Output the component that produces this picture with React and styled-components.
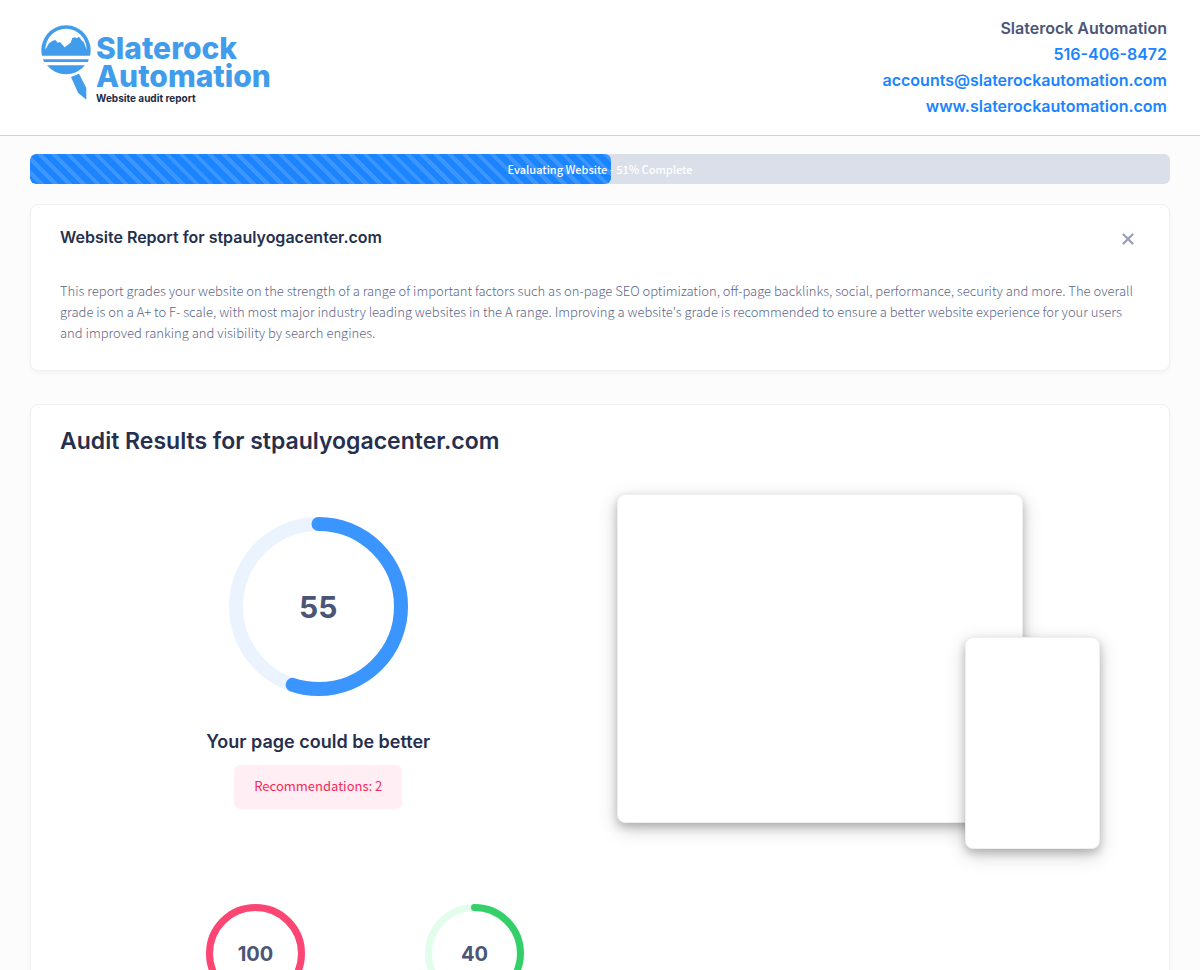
import React, { useState } from 'react';

import styled, { createGlobalStyle } from 'styled-components';
import { X } from 'lucide-react';

const rings = [
    { value: 100, color: '#fb4674', track: '#ffecf1' },
    { value: 40, color: '#35cf6a', track: '#e3fded' },
];

function Logo() {
    return (
        <LogoLink href='/'>
            <svg width='50' height='77' viewBox='35 28 150 231' fill='#419dec' aria-hidden='true'>
                <path
                    fillRule='evenodd'
                    d='M38 123a74 74 0 1 1 144 0z M48 105L58 87L68 79L78 76L85 84L92 82L106 98L124 84L129 70L137 68L142 71L149 66L156 76L163 82L167 92L172 105A62 63 0 1 0 48 105z'
                />
                <path d='M41 134H178L176 142H44z' />
                <path d='M53 152H167A74 74 0 0 1 53 152z' />
                <path d='M125 187L149 177L171 220V255L146 234z' />
            </svg>
            <LogoText>
                <LogoName>Slaterock</LogoName>
                <LogoName>Automation</LogoName>
                <LogoSub>Website audit report</LogoSub>
            </LogoText>
        </LogoLink>
    )
}

function Ring({ size, stroke, value, color, track, large }) {
    const radius = (size - stroke) / 2;
    const length = 2 * Math.PI * radius;
    return (
        <RingBox>
            <svg width={size} height={size} fill='none' strokeWidth={stroke} aria-hidden='true'>
                <circle cx={size / 2} cy={size / 2} r={radius} stroke={track} />
                <circle
                    cx={size / 2}
                    cy={size / 2}
                    r={radius}
                    stroke={color}
                    strokeLinecap='round'
                    strokeDasharray={`${length * value / 100} ${length}`}
                    transform={`rotate(-90 ${size / 2} ${size / 2})`}
                />
            </svg>
            <RingValue $large={large}>{value}</RingValue>
        </RingBox>
    )
}

export default function App() {
    const [introOpen, setIntroOpen] = useState(true);
    const progress = 51;

    return (
        <>
            <GlobalStyle />
            <Header>
                <Logo />
                <Contact>
                    <span>Slaterock Automation</span>
                    <ContactLink href='tel:516-406-8472'>516-406-8472</ContactLink>
                    <ContactLink href='mailto:accounts@slaterockautomation.com'>accounts@slaterockautomation.com</ContactLink>
                    <ContactLink href='http://www.slaterockautomation.com'>www.slaterockautomation.com</ContactLink>
                </Contact>
            </Header>
            <Main>
                <Progress role='progressbar' aria-valuenow={progress} aria-valuemin={0} aria-valuemax={100}>
                    <ProgressFill style={{ width: `${progress}%` }} />
                    <ProgressLabel>Evaluating Website - {progress}% Complete</ProgressLabel>
                </Progress>
                {introOpen && (
                    <Card>
                        <IntroHead>
                            <IntroTitle>Website Report for stpaulyogacenter.com</IntroTitle>
                            <CloseButton type='button' aria-label='Close' onClick={() => setIntroOpen(false)}>
                                <X size={18} strokeWidth={3} />
                            </CloseButton>
                        </IntroHead>
                        <IntroText>
                            This report grades your website on the strength of a range of important factors such as on-page SEO optimization, off-page backlinks, social, performance, security and more. The overall grade is on a A+ to F- scale, with most major industry leading websites in the A range. Improving a website's grade is recommended to ensure a better website experience for your users and improved ranking and visibility by search engines.
                        </IntroText>
                    </Card>
                )}
                <Card>
                    <ResultsTitle>Audit Results for stpaulyogacenter.com</ResultsTitle>
                    <Overview>
                        <Score>
                            <Ring size={179} stroke={14} value={55} color='#3a95ff' track='#ebf3ff' large />
                            <ScoreTitle>Your page could be better</ScoreTitle>
                            <Badge>Recommendations: 2</Badge>
                        </Score>
                        <Previews>
                            <DesktopFrame />
                            <MobileFrame />
                        </Previews>
                    </Overview>
                    <SmallRings>
                        {rings.map((ring) => (
                            <Ring key={ring.value} size={99} stroke={7} {...ring} />
                        ))}
                    </SmallRings>
                </Card>
            </Main>
        </>
    )
}

const GlobalStyle = createGlobalStyle`
* {
    box-sizing: border-box;
}
body {
    margin: 0;
    background: #fcfcfc;
    color: #262f4d;
    font-family: "Noto Sans CJK SC", "Open Sans", sans-serif;
    font-size: 13px;
}
h1, h2, h3, p {
    margin: 0;
}
`
const Header = styled.header`
display: flex;
justify-content: space-between;
align-items: flex-start;
padding: 15px 33px 16px 41px;
background: #ffffff;
border-bottom: 1px solid #d0d0d0;
`
const LogoLink = styled.a`
display: flex;
gap: 5px;
padding-top: 9px;
text-decoration: none;
`
const LogoText = styled.span`
display: flex;
flex-direction: column;
padding-top: 10px;
font-family: Inter, sans-serif;
font-weight: 700;
`
const LogoName = styled.span`
color: #419dec;
font-size: 30px;
font-weight: 800;
line-height: 28px;
`
const LogoSub = styled.span`
color: #1c2b45;
font-size: 10px;
line-height: 16px;
`
const Contact = styled.address`
display: flex;
flex-direction: column;
align-items: flex-end;
color: #4b5676;
font-family: Inter, sans-serif;
font-size: 16px;
font-style: normal;
font-weight: 600;
line-height: 26px;
`
const ContactLink = styled.a`
color: #1b84ff;
text-decoration: none;
`
const Main = styled.main`
padding: 18px 30px 30px;
`
const Progress = styled.div`
display: grid;
height: 30px;
margin-bottom: 20px;
overflow: hidden;
background: #dbdfe9;
border-radius: 6px;
`
const ProgressFill = styled.div`
grid-area: 1 / 1;
border-radius: 6px;
background: repeating-linear-gradient(45deg, #1b84ff 0, #1b84ff 6px, #3d96ff 6px, #3d96ff 10px);
`
const ProgressLabel = styled.span`
grid-area: 1 / 1;
place-self: center;
color: #ffffff;
font-size: 11px;
font-weight: 500;
line-height: 18px;
`
const Card = styled.section`
margin-bottom: 33px;
padding: 20px 29px 27px;
background: #ffffff;
border: 1px solid #f0f0f2;
border-radius: 8px;
box-shadow: 0 3px 4px rgba(0, 0, 0, 0.03);
`
const IntroHead = styled.div`
display: flex;
justify-content: space-between;
align-items: flex-start;
margin-bottom: 31px;
`
const IntroTitle = styled.h2`
font-family: Inter, sans-serif;
font-size: 16px;
font-weight: 600;
line-height: 24px;
`
const CloseButton = styled.button`
display: flex;
padding: 5px 3px 0;
background: none;
border: 0;
color: #99a1b7;
cursor: pointer;
`
const IntroText = styled.p`
color: #5c6788;
font-weight: 300;
line-height: 21px;
`
const ResultsTitle = styled.h1`
font-family: Inter, sans-serif;
font-size: 23px;
font-weight: 600;
line-height: 32px;
`
const Overview = styled.div`
display: grid;
grid-template-columns: 11fr 12fr;
align-items: start;
padding-top: 37px;
`
const Score = styled.div`
display: flex;
flex-direction: column;
align-items: center;
padding-top: 23px;
`
const RingBox = styled.div`
display: grid;
place-items: center;

svg {
    grid-area: 1 / 1;
}
`
const RingValue = styled.span`
grid-area: 1 / 1;
color: #4b5676;
font-family: Inter, sans-serif;
font-size: ${({ $large }) => $large ? '30px' : '20px'};
font-weight: 700;
`
const ScoreTitle = styled.h3`
margin: 34px 0 11px;
font-family: Inter, sans-serif;
font-size: 18px;
font-weight: 600;
line-height: 24px;
`
const Badge = styled.span`
padding: 10px 20px 12px;
background: #ffeef3;
border-radius: 6px;
color: #f8285a;
line-height: 22px;
`
const Previews = styled.div`
position: relative;
margin: 0 40px;
padding-bottom: 26px;
`
const Frame = styled.div`
background: #ffffff;
border: 1px solid #efefef;
border-radius: 8px;
box-shadow: 0 4px 8px rgba(0, 0, 0, 0.2), 0 6px 20px rgba(0, 0, 0, 0.19);
`
const DesktopFrame = styled(Frame)`
width: 84%;
aspect-ratio: 406 / 329;
`
const MobileFrame = styled(Frame)`
position: absolute;
right: 0;
bottom: 0;
width: 28%;
aspect-ratio: 135 / 212;
`
const SmallRings = styled.div`
display: grid;
grid-template-columns: repeat(4, 1fr);
padding: 55px 118px 0 86px;
`
